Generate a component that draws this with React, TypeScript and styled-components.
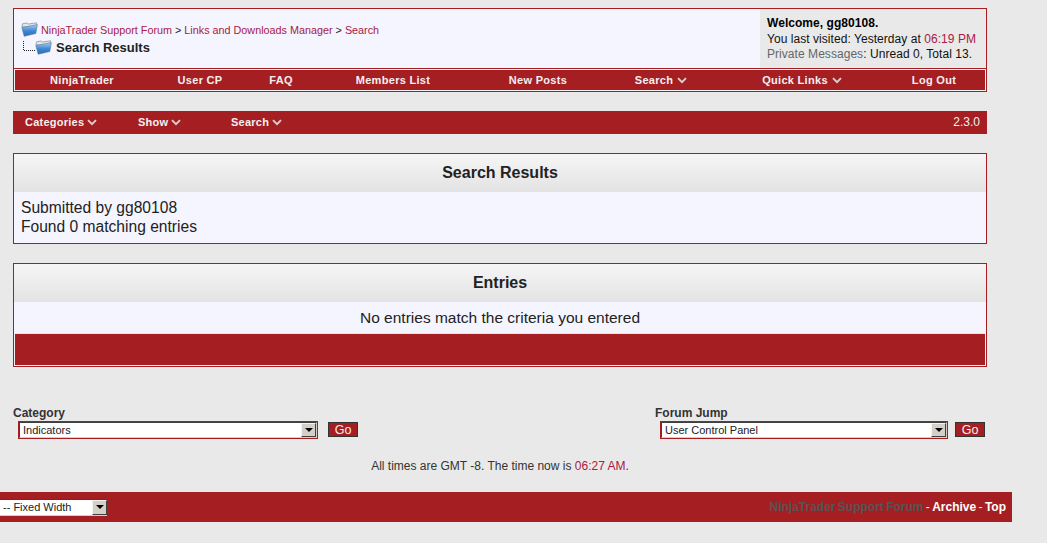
import React from "react";
import styled, { createGlobalStyle } from "styled-components";

const RED = "#a51e22";
const RING = "#f4f2f4";
const LINK = "#a8203f";

const Global = createGlobalStyle`
  html, body { margin: 0; padding: 0; background: #e9e9e9; }
  body { font-family: "Liberation Sans", Arial, sans-serif; color: #222; }
`;

const Page = styled.div`
  display: flex;
  flex-direction: column;
  width: 1047px;
  height: 543px;
  overflow: hidden;
  padding-top: 8px;
  box-sizing: border-box;
`;
const Content = styled.div`
  display: flex;
  flex-direction: column;
  width: 974px;
  margin-left: 13px;
`;
const Header = styled.div`
  display: flex;
  flex-direction: column;
  border: 1px solid ${RED};
`;
const TopRow = styled.div`
  display: flex;
  height: 60px;
  box-sizing: border-box;
  border-bottom: 1px solid ${RED};
`;
const Crumbs = styled.div`
  flex: 1;
  background: #f5f5ff;
  padding: 13px 0 0 7px;
  box-sizing: border-box;
`;
const CrumbLine = styled.div`
  display: flex;
  align-items: center;
  height: 15px;
  font-size: 10.8px;
  color: #222;
  a { color: ${LINK}; text-decoration: none; }
  span { white-space: pre; margin-left: 3px; }
`;
const CurrentLine = styled.div`
  display: flex;
  align-items: center;
  height: 18px;
  margin-top: 1px;
  padding-left: 2px;
  font-size: 13px;
  font-weight: bold;
  color: #222;
  span { margin-left: 4px; }
`;
const Welcome = styled.div`
  width: 226px;
  background: #e9e9e9;
  padding: 7px 0 0 7px;
  box-sizing: border-box;
  font-size: 12px;
  line-height: 15.5px;
  letter-spacing: 0.05px;
  color: #111;
  b { color: #000; }
  em { font-style: normal; color: ${LINK}; }
  u { text-decoration: none; color: #666; }
`;
const Nav = styled.div`
  display: grid;
  grid-template-columns: 134px 102px 60px 164px 126px 120px 162px 102px;
  height: 22px;
  box-sizing: border-box;
  border: 1px solid ${RING};
  background: ${RED};
`;
const NavItem = styled.div`
  display: flex;
  align-items: center;
  justify-content: center;
  gap: 4px;
  font-size: 11px;
  font-weight: bold;
  letter-spacing: 0.3px;
  color: #f5f0f0;
`;
const SubNav = styled.div`
  display: flex;
  align-items: center;
  height: 23px;
  margin-top: 19px;
  padding: 0 7px 1px 12px;
  box-sizing: border-box;
  background: ${RED};
  color: #f5f0f0;
`;
const SubItem = styled.div<{ $w: number }>`
  display: flex;
  align-items: center;
  gap: 3px;
  width: ${(p) => p.$w}px;
  font-size: 11px;
  font-weight: bold;
  letter-spacing: 0.25px;
`;
const Version = styled.div`
  margin-left: auto;
  font-size: 12px;
`;
const Panel = styled.div`
  display: flex;
  flex-direction: column;
  margin-top: 19px;
  border: 1px solid ${RED};
  background: #f5f5ff;
`;
const PanelHead = styled.div`
  display: flex;
  align-items: center;
  justify-content: center;
  height: 38px;
  background: linear-gradient(#f6f6f6, #e3e3e3);
  font-size: 16px;
  font-weight: bold;
  color: #222;
`;
const PanelBody = styled.div`
  padding: 6px 7px 7px;
  font-size: 15.6px;
  line-height: 19px;
  color: #222;
`;
const PanelCentered = styled.div`
  display: flex;
  align-items: center;
  justify-content: center;
  height: 31px;
  font-size: 15.5px;
  color: #222;
`;
const PanelFoot = styled.div`
  height: 33px;
  box-sizing: border-box;
  border: 1px solid ${RING};
  border-top-color: #e4e4ea;
  background: ${RED};
`;
const Forms = styled.div`
  display: flex;
  justify-content: space-between;
  margin-top: 39px;
`;
const FormBlock = styled.div`
  display: flex;
  flex-direction: column;
`;
const FormLabel = styled.div`
  font-size: 12px;
  font-weight: bold;
  line-height: 14px;
  color: #333;
`;
const FormRow = styled.div`
  display: flex;
  align-items: flex-start;
  margin-top: 1px;
  padding-right: 2px;
`;
const RedSelect = styled.div<{ $w: number }>`
  width: ${(p) => p.$w}px;
  height: 18px;
  margin-left: 5px;
  box-sizing: border-box;
  border: 1px solid ${RED};
`;
const SelectInner = styled.div`
  display: flex;
  height: 100%;
  box-sizing: border-box;
  border: 1px solid;
  border-color: #404040 #d4d0c8 #d4d0c8 #404040;
  background: #fff;
`;
const SelectValue = styled.div`
  flex: 1;
  display: flex;
  align-items: center;
  padding-left: 3px;
  font-size: 11px;
  color: #222;
`;
const SelectArrowBox = styled.div`
  display: flex;
  align-items: center;
  justify-content: center;
  width: 15px;
  flex: none;
  background: #d4d0c8;
  border: 1px solid;
  border-color: #f4f4f0 #404040 #404040 #f4f4f0;
  box-sizing: border-box;
`;
const Arrow = styled.div`
  width: 0;
  height: 0;
  border-left: 4px solid transparent;
  border-right: 4px solid transparent;
  border-top: 4px solid #000;
`;
const GoButton = styled.div<{ $ml: number }>`
  display: flex;
  align-items: center;
  justify-content: center;
  width: 30px;
  height: 15px;
  margin: 1px 0 0 ${(p) => p.$ml}px;
  box-sizing: border-box;
  border: 1px solid #333;
  background: ${RED};
  color: #f5f0f0;
  font-size: 12.5px;
`;
const TimeLine = styled.div`
  margin-top: 20px;
  height: 14px;
  text-align: center;
  font-size: 12px;
  line-height: 14px;
  color: #333;
  em { font-style: normal; color: ${LINK}; }
`;
const Footer = styled.div`
  display: flex;
  align-items: center;
  justify-content: space-between;
  width: 1012px;
  height: 30px;
  margin-top: 19px;
  padding-right: 6px;
  box-sizing: border-box;
  background: ${RED};
`;
const FooterLinks = styled.div`
  font-size: 12px;
  word-spacing: -1px;
  color: #f5f0f0;
  b { color: #fff; }
  b.dim { color: #555; }
`;
const FooterSelect = styled.div`
  display: flex;
  width: 107px;
  height: 17px;
  box-sizing: border-box;
  border-top: 1px solid #404040;
  border-bottom: 1px solid #d4d0c8;
  background: #fff;
`;
const FooterValue = styled.div`
  flex: 1;
  display: flex;
  align-items: center;
  padding-left: 3px;
  font-size: 11px;
  color: #222;
`;

const Chevron = () => (
  <svg width="10" height="7" viewBox="0 0 10 7" aria-hidden="true">
    <path d="M1 1.2 L5 5.2 L9 1.2" fill="none" stroke="#dbd0d0" strokeWidth="1.9" />
  </svg>
);

const Folder = ({ id }: { id: string }) => (
  <svg width="17" height="15" viewBox="0 0 17 15" aria-hidden="true" style={{ flex: "none" }}>
    <defs>
      <linearGradient id={id} x1="0" y1="0" x2="0" y2="1">
        <stop offset="0" stopColor="#a9cdee" />
        <stop offset="0.55" stopColor="#3b86d2" />
        <stop offset="1" stopColor="#2a6cb4" />
      </linearGradient>
    </defs>
    <path d="M1 5 L1.5 1.8 L6 1 L7.5 2 L15.5 0.8 L15 5 Z" fill="#e4e6ea" stroke="#7f8a96" strokeWidth="0.7" />
    <path d="M0.8 5.5 L16.4 2.6 L14.8 11.5 L3.2 14.3 Z" fill={`url(#${id})`} stroke="#567a9c" strokeWidth="0.6" />
  </svg>
);

const TreeLine = () => (
  <svg width="12" height="13" viewBox="0 0 12 13" aria-hidden="true" style={{ flex: "none" }}>
    <path d="M0.5 0 V9.5 H12" fill="none" stroke="#222" strokeWidth="1" strokeDasharray="1 1" />
  </svg>
);

const SelectBox = ({ w, value }: { w: number; value: string }) => (
  <RedSelect $w={w}>
    <SelectInner>
      <SelectValue>{value}</SelectValue>
      <SelectArrowBox>
        <Arrow />
      </SelectArrowBox>
    </SelectInner>
  </RedSelect>
);

const navItems: [string, boolean][] = [
  ["NinjaTrader", false],
  ["User CP", false],
  ["FAQ", false],
  ["Members List", false],
  ["New Posts", false],
  ["Search", true],
  ["Quick Links", true],
  ["Log Out", false],
];

export default function App() {
  return (
    <Page>
      <Global />
      <Content>
        <Header>
          <TopRow>
            <Crumbs>
              <CrumbLine>
                <Folder id="folderA" />
                <span>
                  <a>NinjaTrader Support Forum</a> &gt; <a>Links and Downloads Manager</a> &gt; <a>Search</a>
                </span>
              </CrumbLine>
              <CurrentLine>
                <TreeLine />
                <Folder id="folderB" />
                <span>Search Results</span>
              </CurrentLine>
            </Crumbs>
            <Welcome>
              <b>Welcome, gg80108.</b>
              <br />
              You last visited: Yesterday at <em>06:19 PM</em>
              <br />
              <u>Private Messages</u>: Unread 0, Total 13.
            </Welcome>
          </TopRow>
          <Nav>
            {navItems.map(([label, menu]) => (
              <NavItem key={label}>
                {label}
                {menu && <Chevron />}
              </NavItem>
            ))}
          </Nav>
        </Header>

        <SubNav>
          <SubItem $w={113}>
            Categories <Chevron />
          </SubItem>
          <SubItem $w={93}>
            Show <Chevron />
          </SubItem>
          <SubItem $w={90}>
            Search <Chevron />
          </SubItem>
          <Version>2.3.0</Version>
        </SubNav>

        <Panel>
          <PanelHead>Search Results</PanelHead>
          <PanelBody>
            Submitted by gg80108
            <br />
            Found 0 matching entries
          </PanelBody>
        </Panel>

        <Panel>
          <PanelHead>Entries</PanelHead>
          <PanelCentered>No entries match the criteria you entered</PanelCentered>
          <PanelFoot />
        </Panel>

        <Forms>
          <FormBlock>
            <FormLabel>Category</FormLabel>
            <FormRow>
              <SelectBox w={300} value="Indicators" />
              <GoButton $ml={10}>Go</GoButton>
            </FormRow>
          </FormBlock>
          <FormBlock>
            <FormLabel>Forum Jump</FormLabel>
            <FormRow>
              <SelectBox w={288} value="User Control Panel" />
              <GoButton $ml={7}>Go</GoButton>
            </FormRow>
          </FormBlock>
        </Forms>

        <TimeLine>
          All times are GMT -8. The time now is <em>06:27 AM</em>.
        </TimeLine>
      </Content>
      <Footer>
        <FooterSelect>
          <FooterValue>-- Fixed Width</FooterValue>
          <SelectArrowBox>
            <Arrow />
          </SelectArrowBox>
        </FooterSelect>
        <FooterLinks>
          <b className="dim">NinjaTrader Support Forum</b> - <b>Archive</b> - <b>Top</b>
        </FooterLinks>
      </Footer>
    </Page>
  );
}
